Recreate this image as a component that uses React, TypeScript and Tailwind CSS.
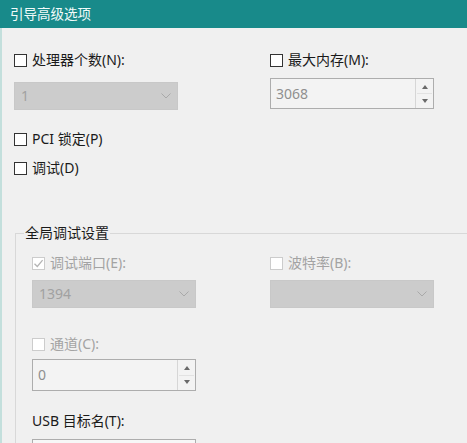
import type { ReactNode } from "react";

function Check({ checked, disabled }: { checked?: boolean; disabled?: boolean }) {
  return (
    <span
      className={
        "flex h-[13px] w-[13px] shrink-0 items-center justify-center border bg-white " +
        (disabled ? "border-[#cccccc]" : "border-[#333333]")
      }
    >
      {checked && (
        <svg width="11" height="11" viewBox="0 0 11 11">
          <path d="M1.5 5.8 L4.3 8.5 L9.6 2.2" fill="none" stroke="#b4b4b4" strokeWidth="1.3" />
        </svg>
      )}
    </span>
  );
}

function CheckRow({
  label,
  checked,
  disabled,
}: {
  label: ReactNode;
  checked?: boolean;
  disabled?: boolean;
}) {
  return (
    <div className="flex h-[20px] items-center gap-[5px]">
      <Check checked={checked} disabled={disabled} />
      <span className={disabled ? "text-[#a3a3a3]" : "text-[#1a1a1a]"}>{label}</span>
    </div>
  );
}

function Select({ value }: { value?: string }) {
  return (
    <div className="flex h-[28px] w-[164px] items-center justify-between border border-[#c8c8c8] bg-[#cccccc] pl-[6px] pr-[6px]">
      <span className="text-[#a1a1a1]">{value}</span>
      <svg width="10" height="6" viewBox="0 0 10 6">
        <path d="M0.5 0.5 L5 5 L9.5 0.5" fill="none" stroke="#a9a9a9" strokeWidth="1" />
      </svg>
    </div>
  );
}

function Spin({ value, tall }: { value: string; tall?: boolean }) {
  return (
    <div
      className={
        "flex w-[164px] border border-[#adadad] bg-[#f3f3f3] " +
        (tall ? "h-[31px]" : "h-[32px]")
      }
    >
      <div className="flex flex-1 items-center pl-[5px] text-[#8f8f8f]">{value}</div>
      <div className="flex w-[18px] flex-col border-l border-[#d6d6d6] p-[1px]">
        <div className="flex flex-1 items-center justify-center border-b border-[#e2e2e2]">
          <svg width="6" height="4" viewBox="0 0 6 4">
            <path d="M0 4 L3 0 L6 4 Z" fill="#6a6a6a" />
          </svg>
        </div>
        <div className="flex flex-1 items-center justify-center">
          <svg width="6" height="4" viewBox="0 0 6 4">
            <path d="M0 0 L6 0 L3 4 Z" fill="#6a6a6a" />
          </svg>
        </div>
      </div>
    </div>
  );
}

export default function App() {
  return (
    <div className="h-[443px] w-[467px] overflow-hidden bg-[#f0f0f0] font-['Noto_Sans','Noto_Sans_CJK_SC',sans-serif] text-[14px] leading-[20px]">
      <div className="flex h-[28px] items-center bg-[#188a8a] pl-[10px] text-[13.5px] text-[#f2fbfa]">
        引导高级选项
      </div>

      <div className="h-[415px] border-l-2 border-[#c3dfdc] pl-[12px] pt-[22px]">
        <div className="flex">
          <div className="flex w-[256px] flex-col gap-[10px]">
            <CheckRow label="处理器个数(N):" />
            <div className="flex h-[31px] items-center">
              <Select value="1" />
            </div>
          </div>
          <div className="flex flex-col gap-[8px]">
            <CheckRow label="最大内存(M):" />
            <Spin value="3068" tall />
          </div>
        </div>

        <div className="mt-[18px] flex flex-col gap-[9px]">
          <CheckRow label="PCI 锁定(P)" />
          <CheckRow label="调试(D)" />
        </div>

        <fieldset className="mt-[45px] ml-[1px] w-[480px] border-l border-t border-[#d8d8d8] pl-[16px]">
          <legend className="-ml-[8px] px-[1px] text-[#1a1a1a]">全局调试设置</legend>
          <div className="mt-[10px] flex">
            <div className="flex w-[238px] flex-col gap-[7px]">
              <CheckRow label="调试端口(E):" checked disabled />
              <Select value="1394" />
            </div>
            <div className="flex flex-col gap-[7px]">
              <CheckRow label="波特率(B):" disabled />
              <Select />
            </div>
          </div>
          <div className="mt-[26px] flex flex-col gap-[5px]">
            <CheckRow label="通道(C):" disabled />
            <Spin value="0" />
          </div>
          <div className="mt-[20px] flex flex-col gap-[8px]">
            <div className="h-[20px] text-[#1a1a1a]">USB 目标名(T):</div>
            <div className="h-[28px] w-[164px] border border-[#adadad] bg-[#f7f7f7]" />
          </div>
        </fieldset>
      </div>
    </div>
  );
}
